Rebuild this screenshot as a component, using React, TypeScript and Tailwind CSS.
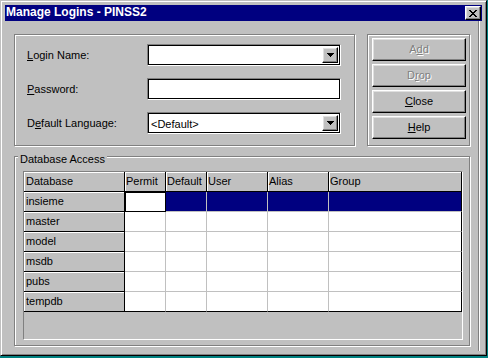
import React from 'react'

const etched = 'border border-[#808080] shadow-[1px_1px_0_#fff,inset_1px_1px_0_#fff]'
const raised =
  'border border-t-white border-l-white border-r-black border-b-black shadow-[inset_-1px_-1px_0_#808080,inset_1px_1px_0_#dfdfdf] bg-[#c0c0c0]'
const sunken =
  'border border-t-[#808080] border-l-[#808080] border-r-white border-b-white shadow-[inset_1px_1px_0_#000,inset_-1px_-1px_0_#000] bg-white'

const columns = [
  { name: 'Database', w: 'w-[101px]', pad: 'pl-[2px]' },
  { name: 'Permit', w: 'w-[41px]', pad: 'pl-[1px]' },
  { name: 'Default', w: 'w-[41px]', pad: 'pl-[1px]' },
  { name: 'User', w: 'w-[61px]', pad: 'pl-[1px]' },
  { name: 'Alias', w: 'w-[61px]', pad: 'pl-[1px]' },
  { name: 'Group', w: 'w-[133px]', pad: 'pl-[1px]' },
]

const databases = ['insieme', 'master', 'model', 'msdb', 'pubs', 'tempdb']

function DropButton() {
  return (
    <div className={`w-[16px] h-full flex items-center justify-center ${raised}`}>
      <svg width="7" height="4" viewBox="0 0 7 4" shapeRendering="crispEdges">
        <path d="M0 0h7v1H0zM1 1h5v1H1zM2 2h3v1H2zM3 3h1v1H3z" fill="#000" />
      </svg>
    </div>
  )
}

function Field({ text, combo }: { text?: string; combo?: boolean }) {
  return (
    <div className={`w-[194px] h-[22px] p-[2px] flex ${sunken}`}>
      <div className="flex-1 pl-[1px] leading-[18px]">{text}</div>
      {combo && <DropButton />}
    </div>
  )
}

function Btn({ children, disabled }: { children: React.ReactNode; disabled?: boolean }) {
  return (
    <div
      className={`w-[94px] h-[23px] flex items-center justify-center ${raised} ${
        disabled ? 'text-[#808080] [text-shadow:1px_1px_0_#fff]' : 'text-black'
      }`}
    >
      {children}
    </div>
  )
}

export default function App() {
  return (
    <div className="w-[488px] h-[358px] bg-[#008080] font-['Liberation_Sans',Arial,sans-serif] text-[11px] text-black">
      <div className="w-[487px] h-[356px] flex flex-col p-[4px] bg-[#c0c0c0] border border-t-[#c0c0c0] border-l-[#c0c0c0] border-r-black border-b-black shadow-[inset_1px_1px_0_#fff,inset_-1px_-1px_0_#808080]">
        {/* title bar */}
        <div className="h-[16px] bg-[#000080] flex items-start justify-between">
          <div className="pl-[1px] mt-[1px] leading-[12px] text-[12px] font-bold text-white">Manage Logins - PINSS2</div>
          <div className={`mt-[1px] mr-[1px] w-[16px] h-[14px] flex items-center justify-center ${raised}`}>
            <svg width="8" height="7" viewBox="0 0 8 7" shapeRendering="crispEdges">
              <path
                d="M0 0h2v1H0zM6 0h2v1H6zM1 1h2v1H1zM5 1h2v1H5zM2 2h4v1H2zM3 3h2v1H3zM2 4h4v1H2zM1 5h2v1H1zM5 5h2v1H5zM0 6h2v1H0zM6 6h2v1H6z"
                fill="#000"
              />
            </svg>
          </div>
        </div>

        <div className="flex-1 flex pr-[2px]">
          <div className="flex-1 pl-[9px] pt-[13px]">
            <div className="flex">
              {/* login fields */}
              <div className={`w-[341px] h-[112px] pl-[12px] pt-[9px] flex flex-col gap-[12px] ${etched}`}>
                <div className="flex items-center h-[22px]">
                  <div className="w-[120px]">
                    <span className="underline">L</span>ogin Name:
                  </div>
                  <Field combo />
                </div>
                <div className="flex items-center h-[22px]">
                  <div className="w-[120px]">
                    <span className="underline">P</span>assword:
                  </div>
                  <Field />
                </div>
                <div className="flex items-center h-[22px]">
                  <div className="w-[120px]">
                    D<span className="underline">e</span>fault Language:
                  </div>
                  <Field combo text="<Default>" />
                </div>
              </div>

              {/* buttons */}
              <div className={`ml-[12px] w-[103px] h-[112px] pl-[4px] pt-[3px] flex flex-col gap-[3px] ${etched}`}>
                <Btn disabled>
                  A<span className="underline">d</span>d
                </Btn>
                <Btn disabled>
                  D<span className="underline">r</span>op
                </Btn>
                <Btn>
                  <span className="underline">C</span>lose
                </Btn>
                <Btn>
                  <span className="underline">H</span>elp
                </Btn>
              </div>
            </div>

            {/* database access */}
            <div className={`relative mt-[10px] w-[456px] h-[190px] pl-[8px] pt-[14px] ${etched}`}>
              <div className="absolute left-[3px] top-[-4px] px-[2px] bg-[#c0c0c0] leading-[13px]">Database Access</div>
              <div className="w-[440px] h-[169px] bg-[#c0c0c0] border border-t-[#808080] border-l-[#808080] border-r-white border-b-white">
                <div className="flex">
                  {columns.map((c) => (
                    <div
                      key={c.name}
                      className={`${c.w} ${c.pad} h-[20px] leading-[19px] border-r border-b border-black shadow-[inset_1px_1px_0_#fff]`}
                    >
                      {c.name}
                    </div>
                  ))}
                </div>
                {databases.map((db, r) => {
                  const last = r === databases.length - 1
                  return (
                    <div key={db} className="flex">
                      <div className="w-[101px] h-[20px] pl-[2px] leading-[19px] border-r border-b border-black shadow-[inset_1px_1px_0_#fff]">
                        {db}
                      </div>
                      {columns.slice(1).map((c, i) => {
                        const lastCol = i === columns.length - 2
                        const focus = r === 0 && i === 0
                        const bg = focus ? 'bg-white' : r === 0 ? 'bg-[#000080]' : 'bg-white'
                        const br = focus || lastCol ? 'border-r-black' : 'border-r-[#c0c0c0]'
                        const bb = focus || last ? 'border-b-black' : 'border-b-[#c0c0c0]'
                        return (
                          <div
                            key={c.name}
                            className={`${c.w} h-[20px] border-r border-b ${br} ${bb} ${bg} ${
                              focus ? 'shadow-[inset_1px_1px_0_#000]' : ''
                            }`}
                          />
                        )
                      })}
                    </div>
                  )
                })}
              </div>
            </div>
          </div>
          <div className="w-[2px] border-l border-l-[#808080] border-r border-r-white" />
        </div>
      </div>
    </div>
  )
}
